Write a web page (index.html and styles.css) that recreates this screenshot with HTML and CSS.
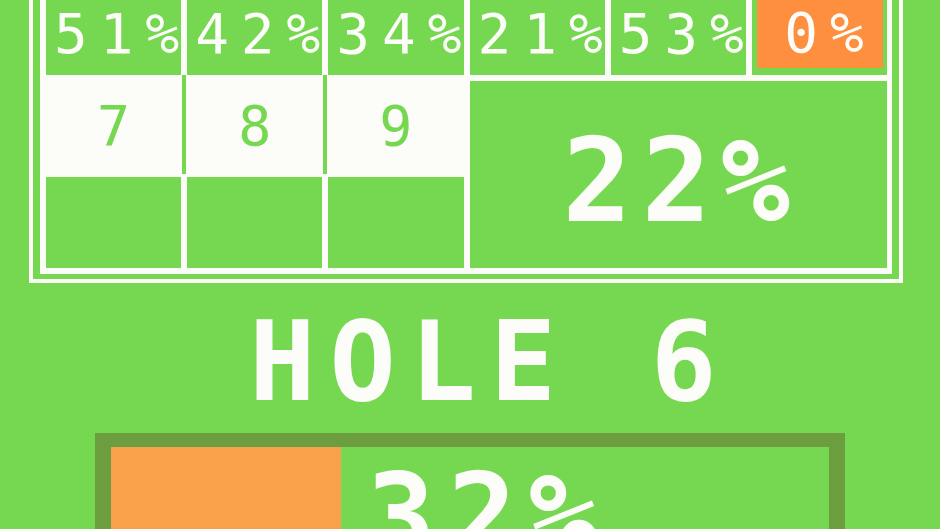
FILE: index.html
```html
<!DOCTYPE html>
<html lang="en">
<head>
    <meta charset="UTF-8">
    <meta name="viewport" content="width=device-width, initial-scale=1.0">
    <title>Hole 6</title>
    <link rel="stylesheet" href="styles.css">
</head>
<body>
    <div class="screen">
        <!-- scorecard: par hit rates per hole, then the back three holes -->
        <section class="scorecard">
            <div class="card-grid">
                <div class="cell rate">51%</div>
                <div class="cell rate">42%</div>
                <div class="cell rate">34%</div>
                <div class="cell rate">21%</div>
                <div class="cell rate">53%</div>
                <div class="cell rate current"><span class="rate-box">0%</span></div>

                <div class="cell hole-no">7</div>
                <div class="cell hole-no">8</div>
                <div class="cell hole-no">9</div>
                <div class="cell total">22%</div>

                <div class="cell blank"></div>
                <div class="cell blank"></div>
                <div class="cell blank"></div>
            </div>
        </section>

        <h1 class="hole-title">HOLE 6</h1>

        <div class="meter">
            <div class="meter-fill" style="width: 32%;"></div>
            <div class="meter-label">32%</div>
        </div>
    </div>
</body>
</html>
```

FILE: styles.css
```css
* {
    margin: 0;
    padding: 0;
    box-sizing: border-box;
}

body {
    background: #76d751;
    color: #fcfcf8;
    font-family: 'DejaVu Sans Mono', 'Liberation Mono', monospace;
}

.screen {
    height: 100vh;
    overflow: hidden;
}

/* double white frame round the card */
.scorecard {
    margin: -22px 37px 0 29px;
    border: 4px solid #fcfcf8;
    padding: 7px 7px 5px 7px;
}

.card-grid {
    display: grid;
    grid-template-columns: repeat(6, minmax(0, 1fr));
    grid-template-rows: 80px 90px 91px;
    gap: 6px;
    padding: 6px 5px 6px 6px;
    background: #fcfcf8;
}

.cell {
    min-width: 0;
    background: #76d751;
    display: flex;
    align-items: center;
    white-space: nowrap;
}

.rate {
    font-size: 56px;
    line-height: 1;
    letter-spacing: 12px;
    padding: 0 0 3px 8px;
}

.current {
    padding: 5px 4px 7px 5px;
}

.rate-box {
    flex: 1;
    align-self: stretch;
    display: flex;
    align-items: center;
    justify-content: center;
    padding: 0 0 3px 20px;
    background: #fe8f3e;
}

.hole-no {
    position: relative;
    justify-content: center;
    background: #fcfcf8;
    color: #76d751;
    font-size: 55px;
    line-height: 1;
}

/* thin green rule between the white hole numbers */
.hole-no + .hole-no::before {
    content: "";
    position: absolute;
    top: -6px;
    bottom: -3px;
    left: -5px;
    width: 4px;
    background: #76d751;
}

.total {
    grid-column: 4 / span 3;
    grid-row: 2 / span 2;
    justify-content: center;
    padding: 14px 0 0 6px;
    font-size: 115px;
    font-weight: bold;
    line-height: 1;
    letter-spacing: 10px;
}

.hole-title {
    margin-top: 24px;
    text-align: center;
    padding-left: 40px;
    font-size: 110px;
    line-height: 110px;
    font-weight: bold;
    letter-spacing: 14px;
}

/* shot power meter */
.meter {
    display: grid;
    width: 750px;
    height: 130px;
    margin: 16px auto 0;
    border: solid #6c9d3e;
    border-width: 14px 16px;
}

.meter-fill,
.meter-label {
    grid-area: 1 / 1;
}

.meter-fill {
    background: #f9a14a;
}

.meter-label {
    text-align: center;
    padding: 12px 0 0 36px;
    font-size: 115px;
    font-weight: bold;
    line-height: 1;
    letter-spacing: 12px;
}
```
